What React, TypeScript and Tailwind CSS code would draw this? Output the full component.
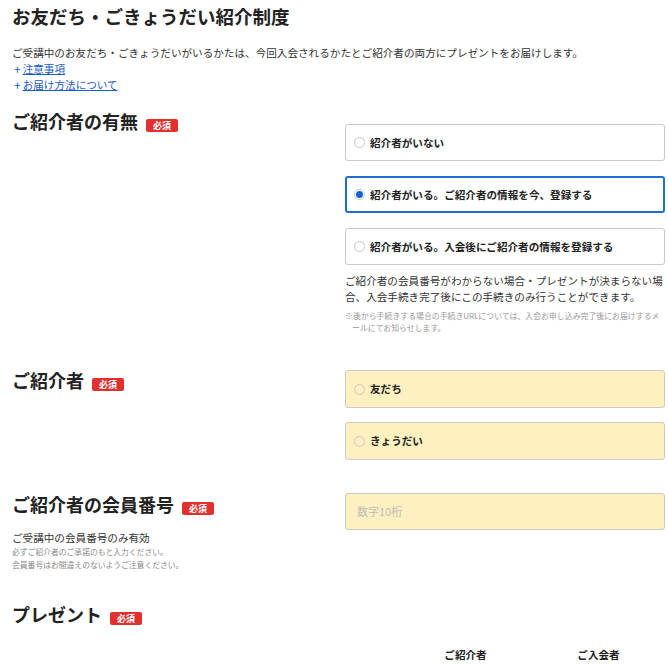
import { type ReactNode } from 'react';

const FONT = { fontFamily: '"Noto Sans CJK JP", "Noto Sans", sans-serif' };

const Badge = () => (
  <span className="ml-[8px] inline-block h-[13px] w-[32px] rounded-[2px] bg-[#e2302f] text-center text-[9px] leading-[13px] font-bold text-white">
    必須
  </span>
);

const Heading = (props: { children: ReactNode }) => (
  <div className="flex items-baseline text-[18px] leading-[24px] font-bold text-[#222]">
    <span>{props.children}</span>
    <Badge />
  </div>
);

const Radio = (props: { checked?: boolean }) => (
  <span className="flex size-[11px] shrink-0 items-center justify-center rounded-full border border-[#c9c9c9]">
    {props.checked && <span className="size-[7px] rounded-full bg-[#1565d0]" />}
  </span>
);

const Option = (props: { label: string; checked?: boolean; yellow?: boolean; h?: string }) => (
  <div
    className={
      'flex items-center gap-[5px] rounded-[3px] text-[10.6px] font-bold text-[#222] ' +
      (props.checked ? 'border-2 border-[#1f6fd0] pl-[7px] ' : 'border border-[#cacaca] pl-[8px] ') +
      (props.yellow ? 'bg-[#fef0bf] ' : 'bg-white ') +
      (props.h ?? 'h-[37px]')
    }
  >
    <Radio checked={props.checked} />
    <span>{props.label}</span>
  </div>
);

const LinkRow = (props: { children: ReactNode }) => (
  <div className="flex h-[16px] items-center pl-[2px]">
    <span className="text-[12px] leading-none">+</span>
    <a className="ml-[2px] text-[10.6px] leading-[16px] underline">{props.children}</a>
  </div>
);

export default function App() {
  return (
    <div className="min-h-[668px] bg-white pr-[3px] pl-[12px] text-[#333]" style={FONT}>
      <h1 className="pt-[4px] text-[18.5px] leading-[24px] font-bold text-[#222]">
        お友だち・ごきょうだい紹介制度
      </h1>

      <p className="mt-[17px] text-[10.6px] leading-[16px]">
        ご受講中のお友だち・ごきょうだいがいるかたは、今回入会されるかたとご紹介者の両方にプレゼントをお届けします。
      </p>
      <div className="flex flex-col text-[#1a5cc8]">
        <LinkRow>注意事項</LinkRow>
        <LinkRow>お届け方法について</LinkRow>
      </div>

      {/* 紹介者の有無 */}
      <div className="mt-[16px] grid grid-cols-[333px_320px] items-start">
        <Heading>ご紹介者の有無</Heading>
        <div className="pt-[15px]">
          <div className="flex flex-col gap-[15px]">
            <Option label="紹介者がいない" />
            <Option label="紹介者がいる。ご紹介者の情報を今、登録する" checked />
            <Option label="紹介者がいる。入会後にご紹介者の情報を登録する" />
          </div>
          <p className="mt-[8px] text-[10.6px] leading-[16px] text-[#333]">
            ご紹介者の会員番号がわからない場合・プレゼントが決まらない場合、入会手続き完了後にこの手続きのみ行うことができます。
          </p>
          <p className="mt-[5px] -indent-[7px] pl-[7px] text-[7.9px] leading-[12px] text-[#999]">
            ※後から手続きする場合の手続きURLについては、入会お申し込み完了後にお届けするメ
            <br />
            ールにてお知らせします。
          </p>
        </div>
      </div>

      {/* 紹介者 */}
      <div className="mt-[34px] grid grid-cols-[333px_320px] items-start">
        <Heading>ご紹介者</Heading>
        <div className="flex flex-col gap-[14px] pt-[2px]">
          <Option label="友だち" yellow h="h-[38px]" />
          <Option label="きょうだい" yellow h="h-[38px]" />
        </div>
      </div>

      {/* 会員番号 */}
      <div className="mt-[32px] grid grid-cols-[333px_320px] items-start">
        <div>
          <Heading>ご紹介者の会員番号</Heading>
          <p className="mt-[15px] text-[10.6px] leading-[14px] text-[#333]">ご受講中の会員番号のみ有効</p>
          <p className="text-[7.8px] leading-[13px] text-[#888]">
            必ずご紹介者のご承諾のもと入力ください。
            <br />
            会員番号はお間違えのないようご注意ください。
          </p>
        </div>
        <div className="pt-[1px]">
          <div className="flex h-[37px] items-center rounded-[3px] border border-[#cacaca] bg-[#fef0bf] pl-[11px] text-[11px] text-[#bdbdbd]">
            数字10桁
          </div>
        </div>
      </div>

      {/* プレゼント */}
      <div className="mt-[31px]">
        <Heading>プレゼント</Heading>
      </div>
      <div className="mt-[21px] grid grid-cols-[333px_320px]">
        <div />
        <div className="grid grid-cols-2 pl-[54px] text-center text-[10.6px] leading-[16px] font-bold text-[#222]">
          <span>ご紹介者</span>
          <span>ご入会者</span>
        </div>
      </div>
    </div>
  );
}
